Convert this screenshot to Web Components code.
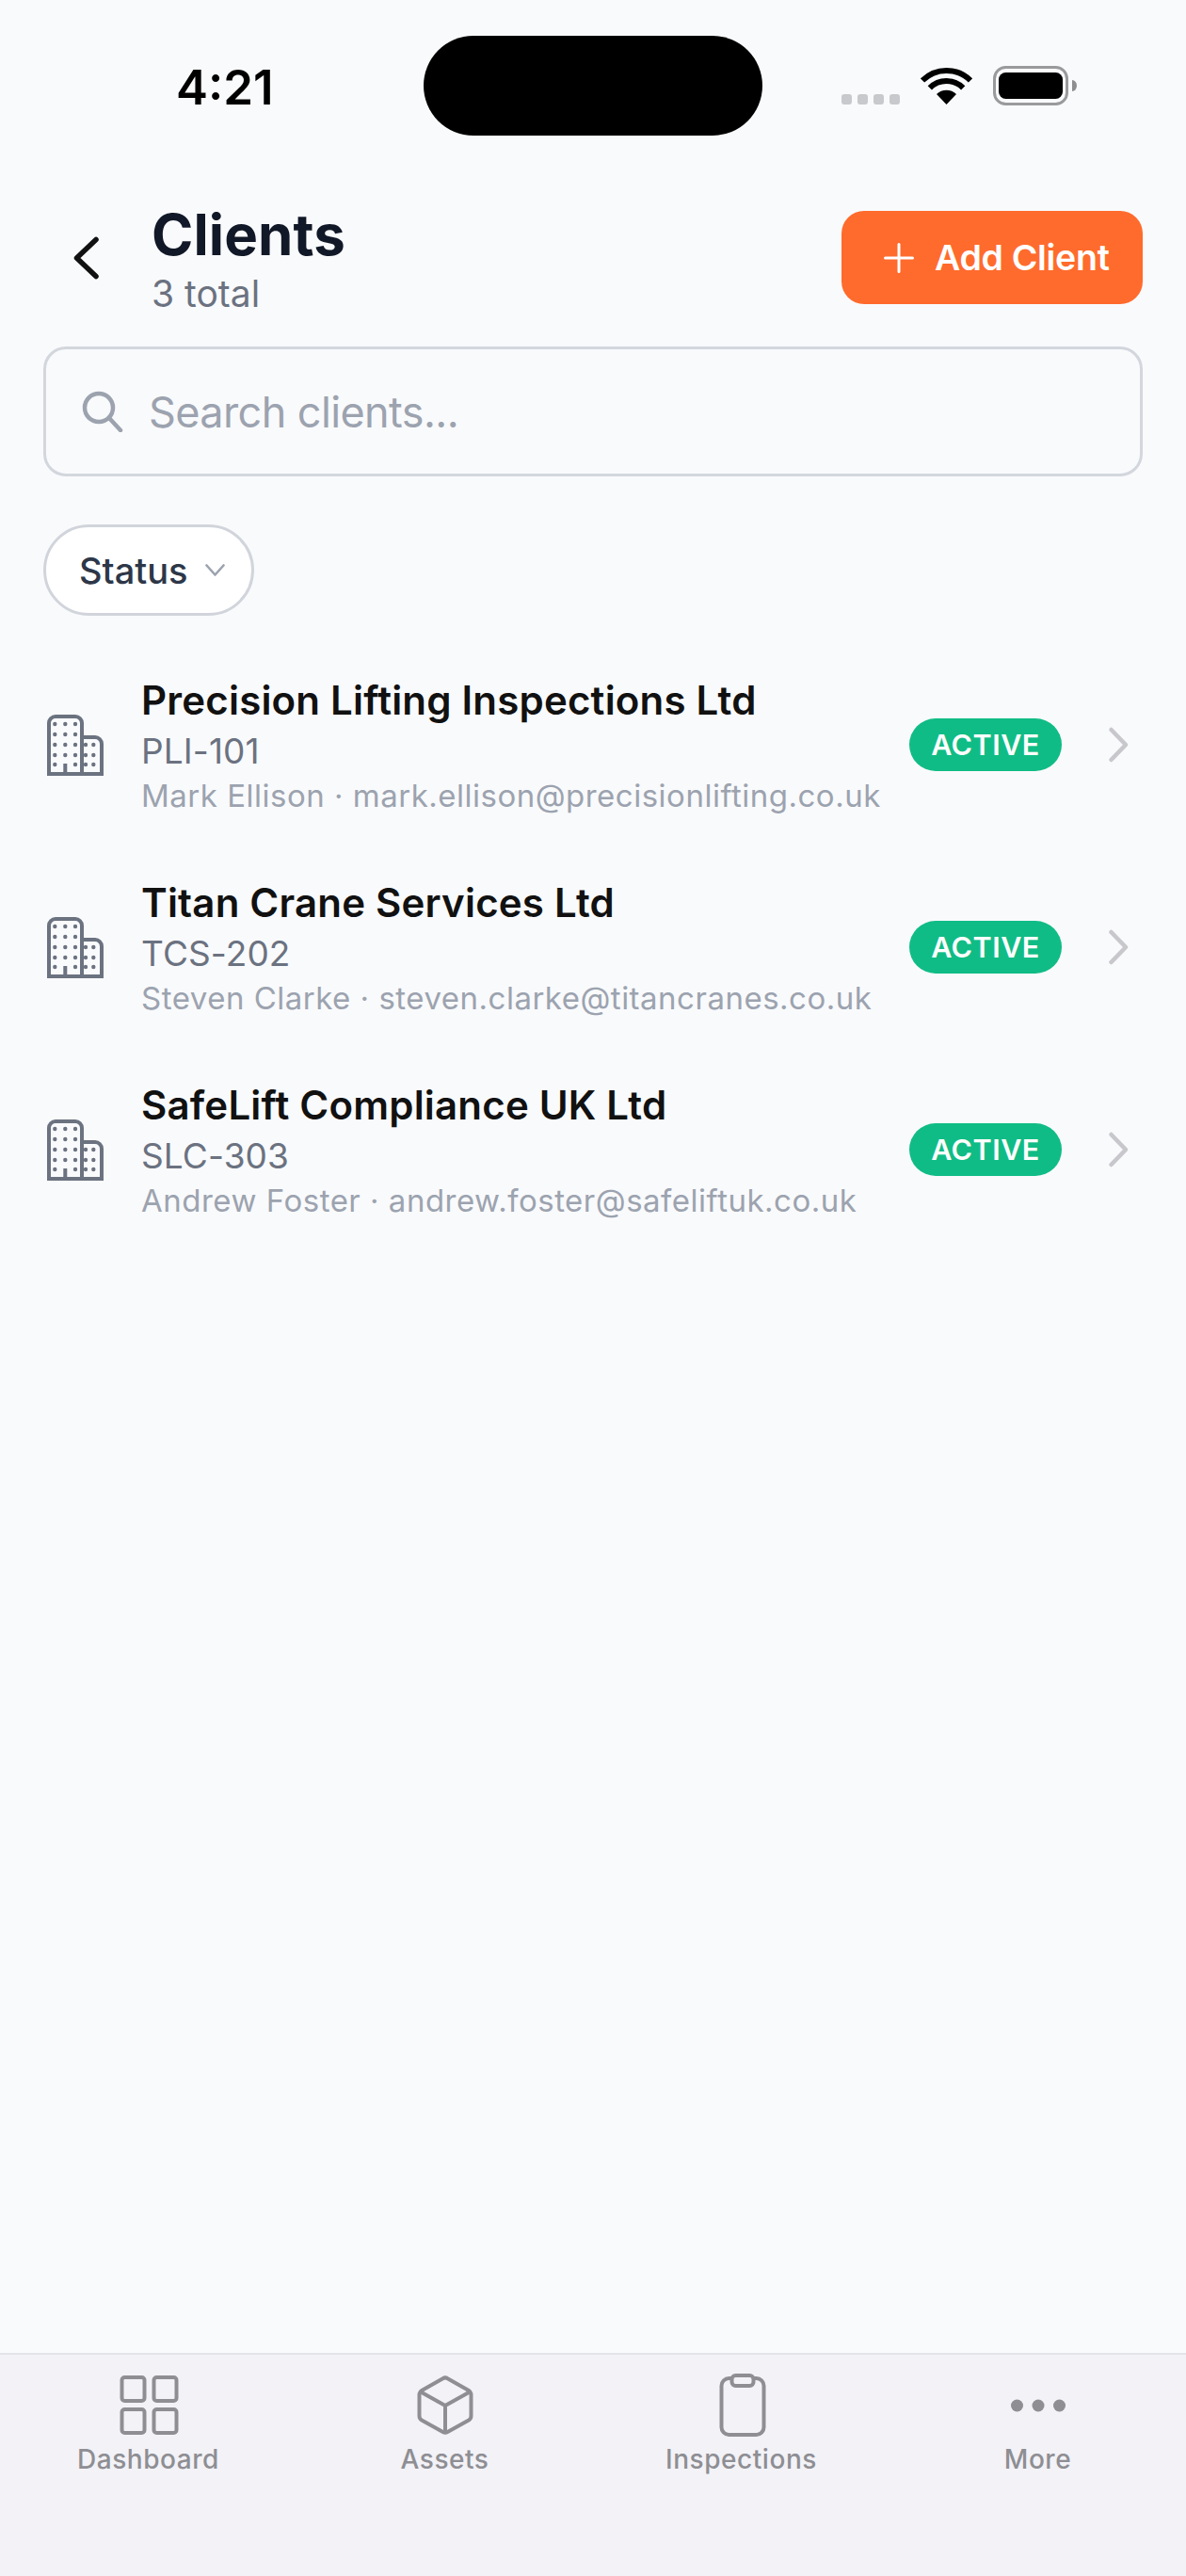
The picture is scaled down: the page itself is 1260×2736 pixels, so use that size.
<!DOCTYPE html>
<html lang="en">
<head>
<meta charset="utf-8">
<title>Clients</title>
<style>
  html, body { margin: 0; padding: 0; }
  body { background: #f9fafc; font-family: Inter, "Noto Sans", sans-serif; }
  #app { display: flex; flex-direction: column; height: 2736px; width: 1260px; }
  client-list { flex: 1; }
</style>
</head>
<body>
<div id="app">
  <status-bar></status-bar>
  <app-header title="Clients" total="3 total"></app-header>
  <search-box placeholder="Search clients..."></search-box>
  <filter-chip label="Status"></filter-chip>
  <client-list>
    <client-row>
      <span slot="name">Precision Lifting Inspections Ltd</span>
      <span slot="code">PLI-101</span>
      <span slot="contact">Mark Ellison · mark.ellison@precisionlifting.co.uk</span>
    </client-row>
    <client-row>
      <span slot="name">Titan Crane Services Ltd</span>
      <span slot="code">TCS-202</span>
      <span slot="contact">Steven Clarke · steven.clarke@titancranes.co.uk</span>
    </client-row>
    <client-row>
      <span slot="name">SafeLift Compliance UK Ltd</span>
      <span slot="code">SLC-303</span>
      <span slot="contact">Andrew Foster · andrew.foster@safeliftuk.co.uk</span>
    </client-row>
  </client-list>
  <tab-bar>
    <tab-item label="Dashboard">
      <svg viewBox="0 0 68 68" fill="none" stroke="currentColor" stroke-width="4">
        <rect x="5.5" y="4" width="24" height="25" rx="3"/>
        <rect x="39.5" y="4" width="24" height="25" rx="3"/>
        <rect x="5.5" y="38" width="24" height="25" rx="3"/>
        <rect x="39.5" y="38" width="24" height="25" rx="3"/>
      </svg>
    </tab-item>
    <tab-item label="Assets">
      <svg viewBox="0 0 68 68" fill="none" stroke="currentColor" stroke-width="4" stroke-linejoin="round">
        <path d="M31.5 5.2Q34 3.6 36.5 5.2L59 18Q61.5 19.5 61.5 22.5V45Q61.5 48 59 49.5L36.5 62Q34 63.5 31.5 62L9 49.5Q6.5 48 6.5 45V22.5Q6.5 19.5 9 18Z"/>
        <path d="M8 19.5L34 34L60 19.5M34 34V63"/>
      </svg>
    </tab-item>
    <tab-item label="Inspections">
      <svg viewBox="0 0 68 68" fill="none" stroke="currentColor" stroke-width="4">
        <rect x="12.5" y="5" width="45" height="60" rx="8"/>
        <rect x="23.5" y="2" width="23" height="11" rx="4" fill="#f2f2f7"/>
      </svg>
    </tab-item>
    <tab-item label="More">
      <svg viewBox="0 0 68 68" fill="currentColor">
        <circle cx="11.5" cy="34" r="6.5"/>
        <circle cx="34" cy="34" r="6.5"/>
        <circle cx="56.5" cy="34" r="6.5"/>
      </svg>
    </tab-item>
  </tab-bar>
</div>

<script>
class StatusBar extends HTMLElement {
  connectedCallback() {
    this.attachShadow({ mode: 'open' });
    this.shadowRoot.innerHTML = `
      <style>
        :host { display: flex; height: 212px; padding-top: 38px; box-sizing: border-box; align-items: flex-start; }
        .time { width: 450px; box-sizing: border-box; padding: 33px 0 0 187px; font: 600 51px/44px Inter, sans-serif; color: #000; }
        .island { width: 360px; height: 106px; border-radius: 53px; background: #000; }
        .right { display: flex; align-items: flex-end; padding: 32px 0 0 84px; }
        .dots { display: flex; gap: 6px; margin-right: 22px; margin-bottom: 1px; }
        .dots i { width: 11px; height: 11px; border-radius: 3px; background: #c8c9cc; }
        .wifi { display: block; width: 55px; height: 40px; margin-right: 22px; margin-bottom: 1px; }
        .battery { display: block; width: 90px; height: 42px; }
      </style>
      <div class="time">4:21</div>
      <div class="island"></div>
      <div class="right">
        <div class="dots"><i></i><i></i><i></i><i></i></div>
        <svg class="wifi" viewBox="0 0 55 40" fill="none" stroke="#000" stroke-width="6">
          <path d="M2 14.5A36 36 0 0 1 53 14.5"/>
          <path d="M9.8 22.3A25 25 0 0 1 45.2 22.3"/>
          <path d="M27.5 40L17 29A15 15 0 0 1 38 29Z" fill="#000" stroke="none"/>
        </svg>
        <svg class="battery" viewBox="0 0 90 42">
          <rect x="1.5" y="1.5" width="77" height="39" rx="12" fill="none" stroke="#9a9a9c" stroke-width="3"/>
          <rect x="6" y="7" width="68" height="28" rx="7.5" fill="#000"/>
          <path d="M84 15a5 6 0 0 1 5 6a5 6 0 0 1 -5 6z" fill="#8e8e90"/>
        </svg>
      </div>`;
  }
}

class AppHeader extends HTMLElement {
  connectedCallback() {
    this.attachShadow({ mode: 'open' });
    this.shadowRoot.innerHTML = `
      <style>
        :host { display: flex; align-items: center; padding: 0 46px 0 47px; height: 123px; font-family: Inter, sans-serif; }
        .back { width: 114px; flex: none; padding-left: 28px; box-sizing: border-box; display: flex; }
        .back svg { width: 33px; height: 50px; display: block; }
        .titles { flex: 1; }
        h1 { margin: 0; font-size: 60px; line-height: 77px; font-weight: 700; color: #111827; letter-spacing: 0.1px; }
        p { margin: 0; font-size: 39px; line-height: 48px; color: #6b7280; }
        .add { display: flex; align-items: center; height: 99px; width: 320px; box-sizing: border-box; padding-left: 45px; gap: 22px;
               background: #ff6b2c; border-radius: 24px; color: #fff; font-size: 37.5px; font-weight: 600; letter-spacing: -0.3px; }
        .add svg { width: 32px; height: 32px; display: block; }
      </style>
      <div class="back">
        <svg viewBox="0 0 33 50" fill="none" stroke="#111" stroke-width="5.5" stroke-linecap="round" stroke-linejoin="round">
          <path d="M27 5.5L6.5 25L27 44.5"/>
        </svg>
      </div>
      <div class="titles">
        <h1>${this.getAttribute('title')}</h1>
        <p>${this.getAttribute('total')}</p>
      </div>
      <div class="add">
        <svg viewBox="0 0 32 32" stroke="#fff" stroke-width="3" stroke-linecap="round"><path d="M16 1.5V30.5M1.5 16H30.5"/></svg>
        <span>Add Client</span>
      </div>`;
  }
}

class SearchBox extends HTMLElement {
  connectedCallback() {
    this.attachShadow({ mode: 'open' });
    this.shadowRoot.innerHTML = `
      <style>
        :host { display: flex; align-items: center; gap: 27px; margin: 33px 46px 0 46px; height: 138px; box-sizing: border-box;
                padding-left: 38px; border: 3px solid #d3d6dd; border-radius: 24px; font-family: Inter, sans-serif; }
        svg { width: 44px; height: 44px; display: block; flex: none; }
        span { font-size: 45px; color: #9ca3af; letter-spacing: -0.6px; }
      </style>
      <svg viewBox="0 0 44 44" fill="none" stroke="#9ca3af" stroke-width="4.5" stroke-linecap="round">
        <circle cx="18" cy="18" r="15"/>
        <path d="M29 29L41 42"/>
      </svg>
      <span>${this.getAttribute('placeholder')}</span>`;
  }
}

class FilterChip extends HTMLElement {
  connectedCallback() {
    this.attachShadow({ mode: 'open' });
    this.shadowRoot.innerHTML = `
      <style>
        :host { display: flex; align-items: center; gap: 18px; align-self: flex-start; margin: 51px 0 0 46px; height: 97px; width: 224px;
                box-sizing: border-box; padding-left: 35px; background: #fff; border: 3px solid #d1d5db; border-radius: 49px;
                font-family: Inter, sans-serif; }
        span { font-size: 38px; font-weight: 500; color: #2d3748; }
        svg { width: 21px; height: 13px; display: block; }
      </style>
      <span>${this.getAttribute('label')}</span>
      <svg viewBox="0 0 21 13" fill="none" stroke="#9ca3af" stroke-width="2.6" stroke-linecap="round" stroke-linejoin="round">
        <path d="M1.5 1.5L10.5 11.5L19.5 1.5"/>
      </svg>`;
  }
}

class ClientList extends HTMLElement {
  connectedCallback() {
    this.attachShadow({ mode: 'open' });
    this.shadowRoot.innerHTML = `
      <style>:host { display: block; padding-top: 29px; }</style>
      <slot></slot>`;
  }
}

class ClientRow extends HTMLElement {
  connectedCallback() {
    this.attachShadow({ mode: 'open' });
    const dots = [];
    for (const y of [12, 23, 34, 45, 55]) {
      for (const x of [11.3, 22.3, 33]) {
        if (!(y === 55 && x === 22.3)) dots.push(`<circle cx="${x}" cy="${y}" r="2.2"/>`);
      }
    }
    for (const y of [34, 45, 55]) {
      for (const x of [44, 52.3]) dots.push(`<circle cx="${x}" cy="${y}" r="2.2"/>`);
    }
    this.shadowRoot.innerHTML = `
      <style>
        :host { display: flex; align-items: center; height: 215px; padding: 0 60px 0 47px; box-sizing: border-box; font-family: Inter, sans-serif; }
        .icon { width: 66px; height: 68px; display: block; flex: none; margin-right: 37px; }
        .text { flex: 1; display: flex; flex-direction: column; min-width: 0; white-space: nowrap; }
        .name { font-size: 42px; line-height: 58px; font-weight: 600; color: #111; letter-spacing: 0.2px; }
        .code { font-size: 37px; line-height: 50px; color: #6b7280; letter-spacing: 0.1px; }
        .contact { font-size: 33px; line-height: 44px; color: #9ca3af; letter-spacing: 0.5px; }
        .badge { height: 56px; width: 162px; display: flex; align-items: center; justify-content: center; flex: none;
                 border-radius: 28px; background: #10bc85; color: #fff; font-size: 30.5px; font-weight: 600; letter-spacing: 0.5px; }
        .chev { width: 24px; height: 40px; display: block; flex: none; margin-left: 48px; }
      </style>
      <svg class="icon" viewBox="0 0 66 68" fill="none" stroke="#6b7280" stroke-width="4">
        <path d="M5 65V11a7 7 0 0 1 7-7H33a7 7 0 0 1 7 7V65"/>
        <path d="M40 26H54a7 7 0 0 1 7 7V65"/>
        <path d="M3 65H63M22.3 65V54"/>
        <g fill="#6b7280" stroke="none">${dots.join('')}</g>
      </svg>
      <div class="text">
        <div class="name"><slot name="name"></slot></div>
        <div class="code"><slot name="code"></slot></div>
        <div class="contact"><slot name="contact"></slot></div>
      </div>
      <div class="badge">ACTIVE</div>
      <svg class="chev" viewBox="0 0 24 40" fill="none" stroke="#c7c7cc" stroke-width="4.5" stroke-linecap="round" stroke-linejoin="round">
        <path d="M4.5 4L20 20L4.5 36"/>
      </svg>`;
  }
}

class TabBar extends HTMLElement {
  connectedCallback() {
    this.attachShadow({ mode: 'open' });
    this.shadowRoot.innerHTML = `
      <style>
        :host { display: grid; grid-template-columns: repeat(4, 1fr); height: 237px; box-sizing: border-box; padding-top: 20px;
                background: #f2f2f7; border-top: 2px solid #e3e3e8; }
      </style>
      <slot></slot>`;
  }
}

class TabItem extends HTMLElement {
  connectedCallback() {
    this.attachShadow({ mode: 'open' });
    this.shadowRoot.innerHTML = `
      <style>
        :host { display: flex; flex-direction: column; align-items: center; gap: 5px; color: #8e8e93; font-family: Inter, sans-serif; }
        ::slotted(svg) { width: 68px; height: 68px; display: block; }
        span { font-size: 28px; line-height: 36px; font-weight: 500; letter-spacing: 0.55px; }
      </style>
      <slot></slot>
      <span>${this.getAttribute('label')}</span>`;
  }
}

customElements.define('status-bar', StatusBar);
customElements.define('app-header', AppHeader);
customElements.define('search-box', SearchBox);
customElements.define('filter-chip', FilterChip);
customElements.define('client-list', ClientList);
customElements.define('client-row', ClientRow);
customElements.define('tab-bar', TabBar);
customElements.define('tab-item', TabItem);
</script>
</body>
</html>
